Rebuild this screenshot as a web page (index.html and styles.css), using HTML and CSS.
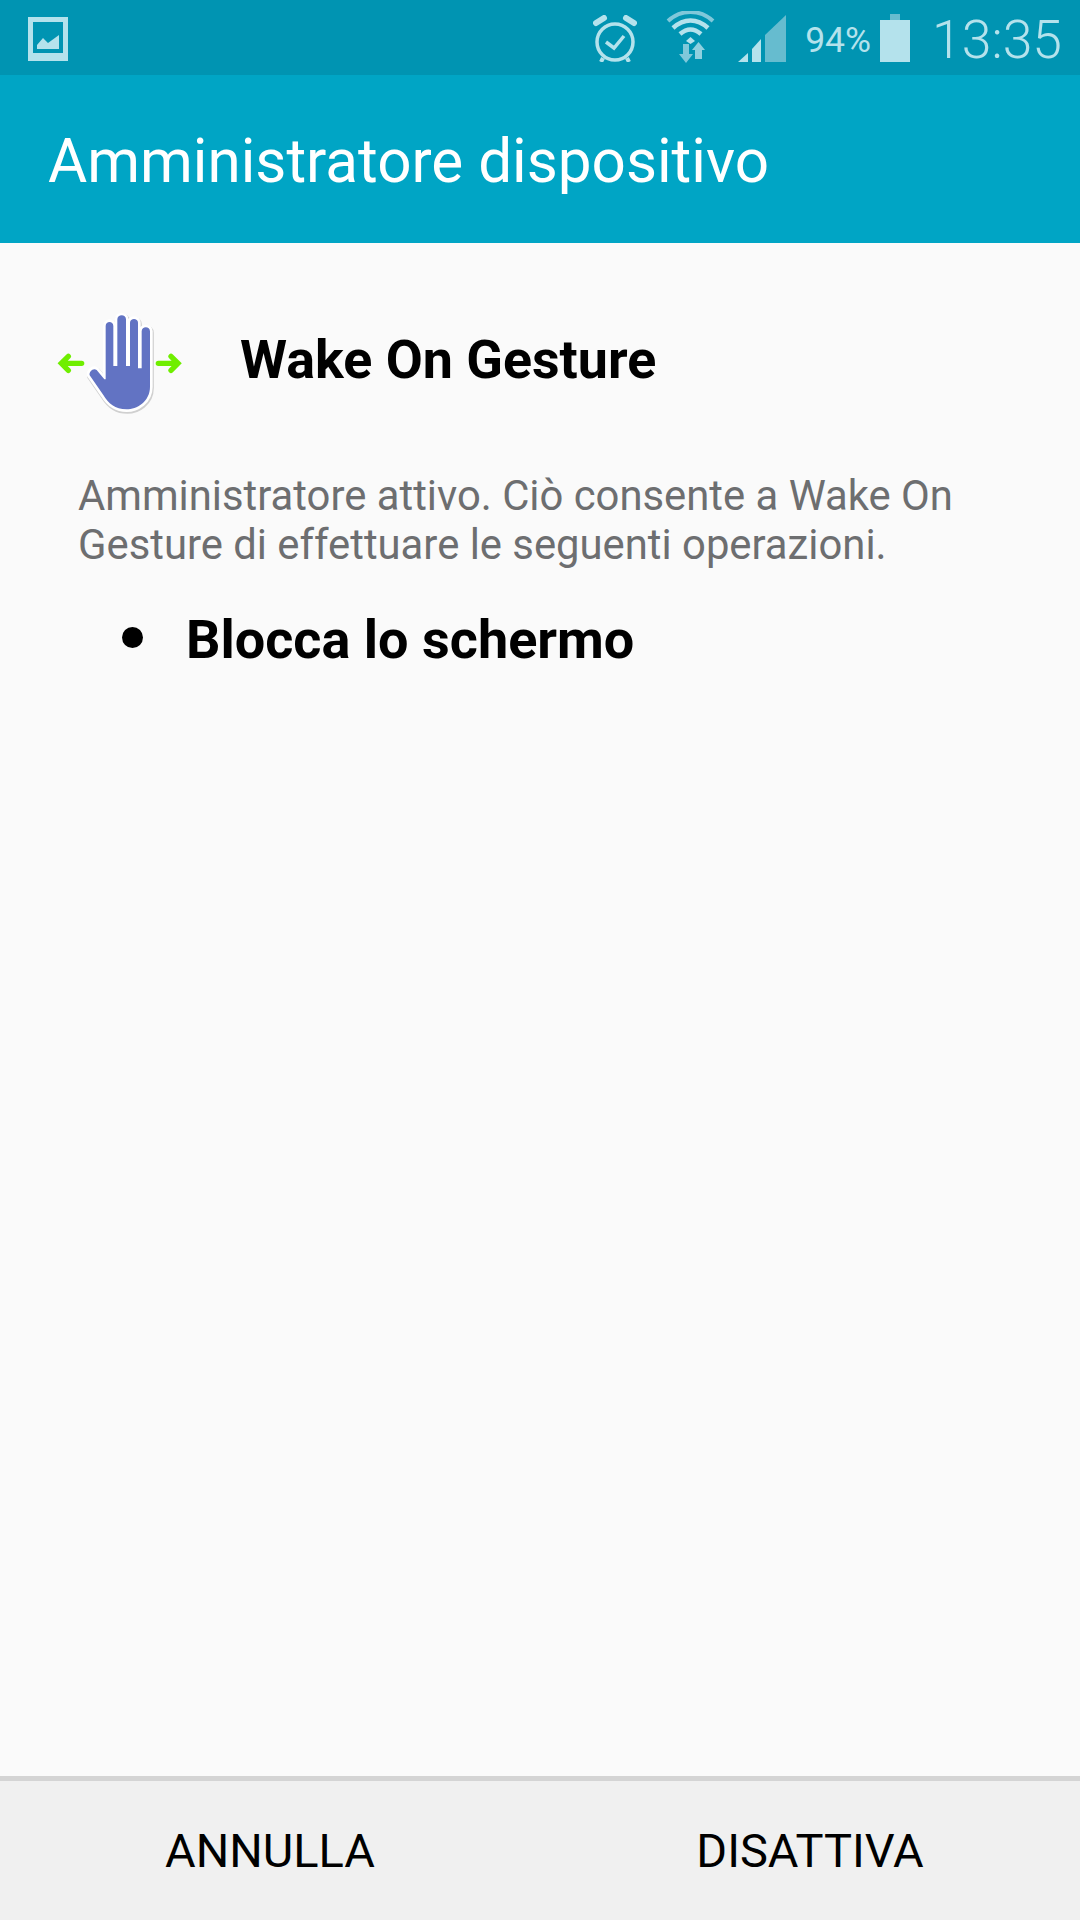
FILE: index.html
```html
<!DOCTYPE html>
<html lang="it">
<head>
  <meta charset="UTF-8">
  <meta name="viewport" content="width=device-width, initial-scale=1.0">
  <title>Amministratore dispositivo</title>
  <link rel="stylesheet" href="styles.css">
</head>
<body>

  <div class="statusBar">
    <svg class="picIcon" width="40" height="44" viewBox="0 0 40 44">
      <path fill-rule="evenodd" fill="#b4e2ec" d="M0 0H40V44H0ZM5 5V36H35V5Z"/>
      <path fill="#b4e2ec" d="M9 32V28L15 21L20 26L31 18V32Z"/>
    </svg>
    <div class="statusRight">
      <svg class="alarmIcon" width="44" height="47" viewBox="0 0 44 47">
        <circle cx="22" cy="27" r="18" fill="none" stroke="#b4e2ec" stroke-width="3.500"/>
        <path d="M3 8L11 3M33 3L41 8" stroke="#b4e2ec" stroke-width="6" stroke-linecap="round" fill="none"/>
        <path d="M13 27L21 33L31 21" stroke="#b4e2ec" stroke-width="3.500" fill="none"/>
        <path d="M10 43L8 47M34 43L36 47" stroke="#b4e2ec" stroke-width="4" fill="none"/>
      </svg>
      <svg class="wifiIcon" width="49" height="53" viewBox="0 0 49 53">
        <path d="M2 10C15 -2 34 -2 47 10" stroke="#7fc8da" stroke-width="4" fill="none"/>
        <path d="M7 17C18 7 31 7 42 17" stroke="#b4e2ec" stroke-width="4.500" fill="none"/>
        <path d="M14 23C21 17 28 17 35 23" stroke="#b4e2ec" stroke-width="4.500" fill="none"/>
        <path d="M20 30L24.500 26L29 30L24.500 33Z" fill="#b4e2ec"/>
        <path d="M17 33H23V43H27L20 52L13 43H17Z" fill="#7fc8da"/>
        <path d="M29 48H36V39H39L32.500 31L26 39H29Z" fill="#8fd0df"/>
      </svg>
      <svg class="signalIcon" width="49" height="49" viewBox="0 0 49 49">
        <path d="M0 48L10 39V48Z" fill="#b4e2ec"/>
        <path d="M14 35L23 25V48H14Z" fill="#b4e2ec"/>
        <path d="M27 21L48 1V48H27Z" fill="#66bccf"/>
      </svg>
      <span class="battText">94%</span>
      <svg class="battIcon" width="30" height="48" viewBox="0 0 30 48">
        <path d="M10 0H20V6H30V48H0V6H10Z" fill="#b4e2ec"/>
        <path d="M10 0H20V6H10Z" fill="#66bccf"/>
      </svg>
      <span class="clock">13:35</span>
    </div>
  </div>

  <div class="titleBar">Amministratore dispositivo</div>

  <div class="content">
    <div class="appRow">
      <svg class="appIcon" width="160" height="150" viewBox="0 0 480 450">
        <path class="arrow" d="M125 220H70M85 199L64 220L85 241"/>
        <path class="arrow" d="M355 220H410M393 199L414 220L393 241"/>
        <!-- hand, drawn three times for shadow, white outline and fill -->
        <path class="handShadow" transform="translate(2 4)" d="M149 256C146 245 160 232 170 240L193 268H197V108C197 92 220 92 220 108V228H232V88C232 72 258 72 258 88V228H270V98C270 83 294 83 294 98V235H305V124C305 108 330 108 330 124V290C330 335 290 358 260 358C225 358 205 340 190 315Z"/>
        <path class="handEdge" d="M149 256C146 245 160 232 170 240L193 268H197V108C197 92 220 92 220 108V228H232V88C232 72 258 72 258 88V228H270V98C270 83 294 83 294 98V235H305V124C305 108 330 108 330 124V290C330 335 290 358 260 358C225 358 205 340 190 315Z"/>
        <path class="handFill" d="M149 256C146 245 160 232 170 240L193 268H197V108C197 92 220 92 220 108V228H232V88C232 72 258 72 258 88V228H270V98C270 83 294 83 294 98V235H305V124C305 108 330 108 330 124V290C330 335 290 358 260 358C225 358 205 340 190 315Z"/>
      </svg>
      <span class="appName">Wake On Gesture</span>
    </div>
    <p class="desc">Amministratore attivo. Ciò consente a Wake On Gesture di effettuare le seguenti operazioni.</p>
    <div class="policy">
      <span class="dot"></span>
      <span class="policyName">Blocca lo schermo</span>
    </div>
  </div>

  <div class="bottomBar">
    <div class="bottomBtn">ANNULLA</div>
    <div class="bottomBtn">DISATTIVA</div>
  </div>

</body>
</html>
```

FILE: styles.css
```css
html, body {
  height: 100%;
}

body {
  font-family: 'Roboto', sans-serif;
  display: flex;
  flex-direction: column;
  margin: 0;
  background-color: #fafafa;
  overflow: hidden;
}

svg {
  display: block;
  flex: none;
}

.statusBar {
  display: flex;
  align-items: center;
  justify-content: space-between;
  height: 75px;
  padding: 0 18px 0 28px;
  background-color: #0094b2;
  color: #b4e2ec;
}

.statusRight {
  display: flex;
  align-items: center;
}

.picIcon {
  margin-top: 3px;
}

.alarmIcon {
  margin-top: 2px;
  margin-right: 29px;
}

.wifiIcon {
  margin-right: 23px;
}

.signalIcon {
  margin-top: 2px;
  margin-right: 18px;
}

.battText {
  margin-top: 4px;
  margin-right: 9px;
  font-size: 35.500px;
}

.battIcon {
  margin-right: 22px;
}

.clock {
  margin-top: 4px;
  font-size: 53.500px;
  font-weight: 300;
}

.titleBar {
  display: flex;
  align-items: center;
  height: 168px;
  padding: 4px 0 0 48px;
  box-sizing: border-box;
  background-color: #00a5c5;
  color: #fff;
  font-size: 60.200px;
}

.content {
  flex: 1;
}

.appRow {
  display: flex;
  align-items: center;
  margin-top: 47px;
  padding-left: 40px;
}

.appIcon {
  margin-right: 40px;
}

.handShadow {
  fill: #bbb;
  stroke: #d0d0d0;
  stroke-width: 19;
  stroke-linejoin: round;
}

.handEdge {
  fill: #fff;
  stroke: #fff;
  stroke-width: 16;
  stroke-linejoin: round;
}

.handFill {
  fill: #6273c3;
}

.arrow {
  fill: none;
  stroke: #6fee00;
  stroke-width: 16;
  stroke-linecap: round;
}

.appName {
  margin-bottom: 12px;
  font-size: 53.800px;
  font-weight: 700;
  color: #000;
}

.desc {
  margin: 31px 100px 0 78px;
  font-size: 41.800px;
  line-height: 49px;
  color: #6d6e70;
}

.policy {
  display: flex;
  align-items: center;
  margin-top: 39px;
  padding-left: 122px;
}

.dot {
  width: 21px;
  height: 21px;
  margin-right: 43px;
  margin-bottom: 5px;
  border-radius: 50%;
  background-color: #000;
}

.policyName {
  font-size: 54px;
  font-weight: 700;
  color: #000;
}

.bottomBar {
  display: flex;
  height: 139px;
  border-top: 5px solid #d4d4d4;
  background-color: #f0f0f0;
}

.bottomBtn {
  flex: 1;
  display: flex;
  align-items: center;
  justify-content: center;
  font-size: 47px;
  color: #000;
}
```
